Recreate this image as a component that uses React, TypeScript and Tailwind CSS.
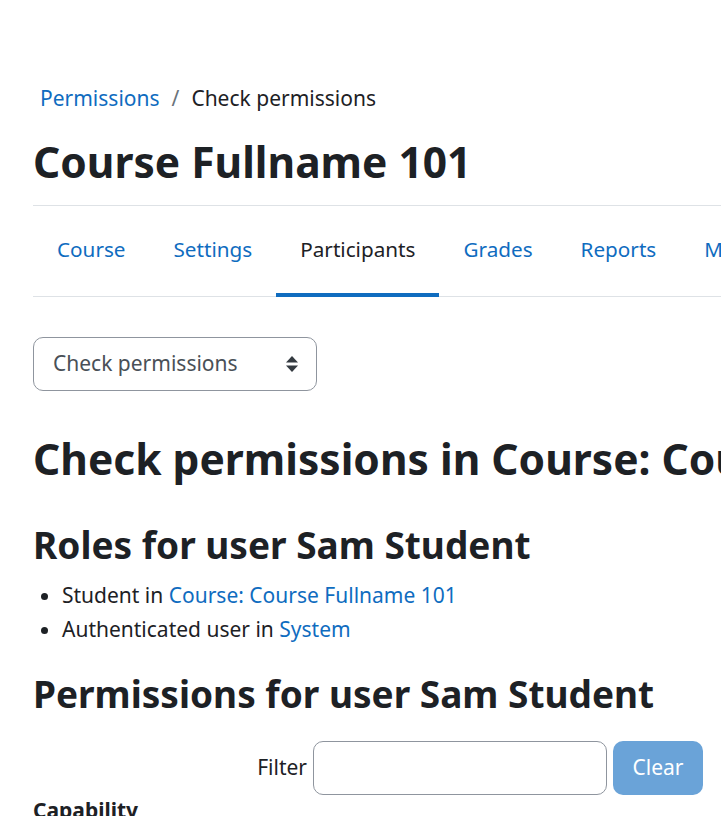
import React from 'react';

const tabs = ['Course', 'Settings', 'Participants', 'Grades', 'Reports', 'More'];

export default function App() {
    return (
        <div
            className="w-[721px] h-[816px] overflow-hidden bg-white text-[#1d2125]"
            style={{ fontFamily: '"Segoe UI", "Noto Sans", Roboto, sans-serif' }}
        >
            <div className="pl-[33px] pt-[80px] w-[1100px]">
                {/* Breadcrumb */}
                <nav className="flex items-center text-[21px] leading-[36px] pl-[7px]">
                    <a className="text-[#0f6cbf]">Permissions</a>
                    <span className="px-[12px] text-[#6a737b]">/</span>
                    <span>Check permissions</span>
                </nav>

                {/* Page title */}
                <h1 className="mt-[18px] text-[42.5px] font-bold leading-[56px]">Course Fullname 101</h1>

                {/* Secondary navigation */}
                <div className="mt-[15px] border-t border-[#dee2e6] w-[688px]">
                    <ul className="flex border-b border-[#dee2e6] w-[1100px]">
                        {tabs.map((t) => (
                            <li
                                key={t}
                                className={
                                    t === 'Participants'
                                        ? 'px-[24px] pt-[25px] pb-[25px] text-[20.7px] leading-[36px] text-[#1d2125] border-b-[4px] border-[#0f6cbf] -mb-px'
                                        : 'px-[24px] pt-[25px] pb-[29px] text-[20.7px] leading-[36px] text-[#0f6cbf]'
                                }
                            >
                                {t}
                            </li>
                        ))}
                    </ul>
                </div>

                {/* Selector */}
                <div className="mt-[40px] w-[284px] h-[54px] rounded-[10px] border border-[#8f959e] flex items-center justify-between pl-[19px] pr-[17px] text-[21px] text-[#495057]">
                    <span>Check permissions</span>
                    <svg width="14" height="18" viewBox="0 0 14 18">
                        <path d="M7 1 L13 7.5 H1 Z" fill="#343a40" />
                        <path d="M7 17 L13 10.5 H1 Z" fill="#343a40" />
                    </svg>
                </div>

                <h2 className="mt-[36px] text-[42.5px] font-bold leading-[64px] whitespace-nowrap">
                    Check permissions in Course: Course Fullname 101
                </h2>

                <h3 className="mt-[30px] text-[37px] font-bold leading-[48px]">Roles for user Sam Student</h3>
                <ul className="mt-[9px] list-disc pl-[29px] text-[21px] leading-[34px]">
                    <li>
                        Student in <a className="text-[#0f6cbf]">Course: Course Fullname 101</a>
                    </li>
                    <li>
                        Authenticated user in <a className="text-[#0f6cbf]">System</a>
                    </li>
                </ul>

                <h3 className="mt-[24px] text-[37px] font-bold leading-[48px]">Permissions for user Sam Student</h3>

                <div className="mt-[23px] w-[670px] flex items-center justify-end">
                    <label className="text-[21px] mr-[6px]">Filter</label>
                    <input className="w-[294px] h-[54px] rounded-[10px] border border-[#8f959e] bg-white" />
                    <button className="ml-[6px] w-[90px] h-[54px] rounded-[10px] bg-[#6aa3d8] text-white text-[21px]">
                        Clear
                    </button>
                </div>

                <div className="mt-[1px] text-[21px] font-bold leading-[28px]">Capability</div>
            </div>
        </div>
    );
}
